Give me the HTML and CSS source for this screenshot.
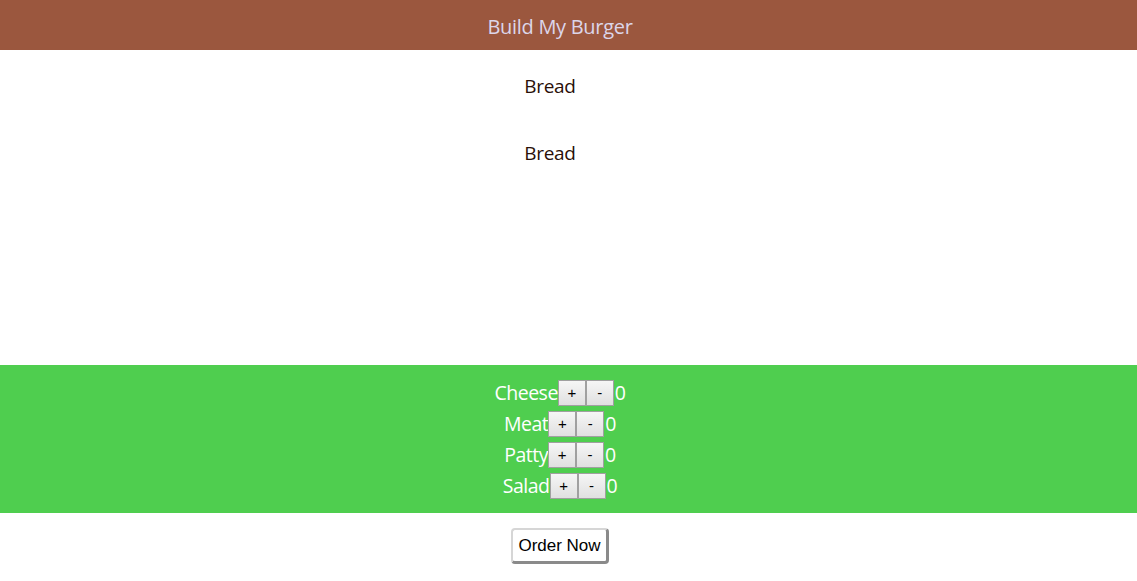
FILE: index.html
```html
<!DOCTYPE html>
<html>
<head>
<meta charset="utf-8">
<link rel="stylesheet" href="styles.css">
</head>
<body>
<header class="topbar">Build My Burger</header>
<main class="burger">
  <div class="bread">Bread</div>
  <div class="bread">Bread</div>
</main>
<section class="controls">
  <div class="row"><span class="label">Cheese</span><button class="btn">+</button><button class="btn">-</button><span class="count">0</span></div>
  <div class="row"><span class="label">Meat</span><button class="btn">+</button><button class="btn">-</button><span class="count">0</span></div>
  <div class="row"><span class="label">Patty</span><button class="btn">+</button><button class="btn">-</button><span class="count">0</span></div>
  <div class="row"><span class="label">Salad</span><button class="btn">+</button><button class="btn">-</button><span class="count">0</span></div>
</section>
<div class="order-wrap"><button class="order">Order Now</button></div>
</body>
</html>
```

FILE: styles.css
```css
body {
  margin: 0;
  font-family: "Open Sans", "Noto Sans", sans-serif;
}
.topbar {
  height: 50px;
  background: #9b573e;
  color: #dcd6ea;
  font-size: 20px;
  line-height: 53px;
  overflow: hidden;
  text-align: center;
  letter-spacing: -0.3px;
  padding-right: 17px;
}
.burger {
  height: 315px;
  display: flex;
  flex-direction: column;
  align-items: center;
  padding: 24px 37px 0 0;
  box-sizing: border-box;
  gap: 43px;
}
.bread {
  font-size: 19px;
  line-height: 24px;
  color: #2a0f08;
  letter-spacing: -0.3px;
}
.controls {
  background: #4fce4f;
  padding: 12px 17px 12px 0;
  display: flex;
  flex-direction: column;
  align-items: center;
}
.row {
  height: 31px;
  display: flex;
  align-items: center;
  color: #fff;
  font-size: 19.5px;
  letter-spacing: -0.5px;
}
.btn {
  width: 28px;
  height: 26px;
  margin: 0;
  padding: 0;
  border: 1px solid #a0a0a0;
  background: linear-gradient(#f6f6f6, #e0e0e0);
  font-family: "Liberation Sans", Arial, sans-serif;
  font-size: 15px;
  color: #000;
}
.count {
  margin-left: 1px;
}
.order-wrap {
  display: flex;
  justify-content: center;
  padding: 15px 17px 0 0;
}
.order {
  width: 98px;
  height: 36px;
  background: #fff;
  border: 2px solid #d6d6d6;
  border-right: 3px solid #8a8a8a;
  border-bottom: 3px solid #8a8a8a;
  border-radius: 4px;
  font-family: "Liberation Sans", Arial, sans-serif;
  font-size: 17px;
  color: #000;
  padding: 0;
}
```
